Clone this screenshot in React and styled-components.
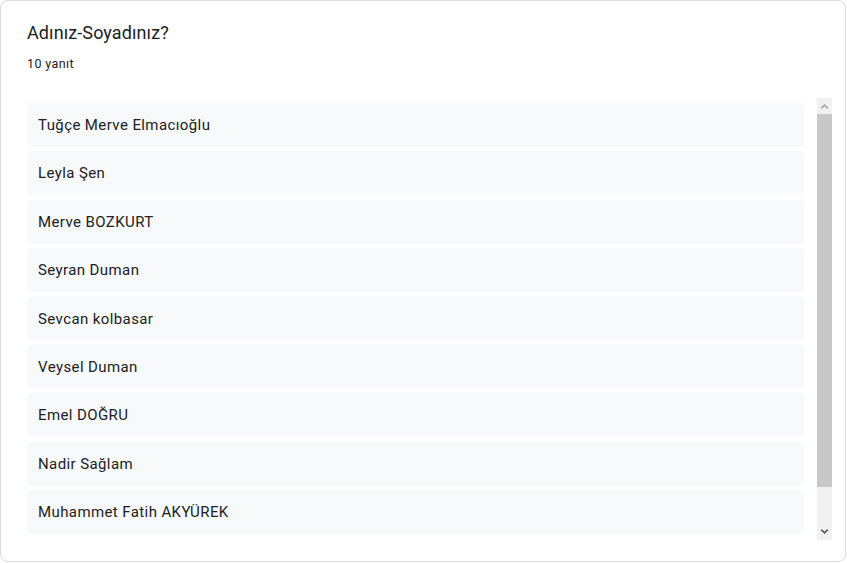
import React from "react";
import styled, { createGlobalStyle } from "styled-components";

const GlobalStyle = createGlobalStyle`
  html, body {
    margin: 0;
    padding: 0;
    background: #fff;
  }
  body {
    font-family: Roboto, "Liberation Sans", Arial, sans-serif;
    color: #202124;
  }
`;

const Card = styled.div`
  box-sizing: border-box;
  width: 846px;
  height: 562px;
  border: 1px solid #dadce0;
  border-radius: 8px;
  background: #fff;
  padding: 20px 13px 0 26px;
`;

const Title = styled.div`
  font-size: 18px;
  line-height: 24px;
  color: #202124;
  letter-spacing: 0.1px;
`;

const Count = styled.div`
  margin-top: 11px;
  font-size: 12.5px;
  line-height: 16px;
  color: #202124;
  letter-spacing: 0.4px;
`;

const Body = styled.div`
  margin-top: 26px;
  height: 442px;
  display: flex;
  gap: 13px;
`;

const List = styled.ul`
  flex: 1;
  list-style: none;
  margin: 0;
  padding: 5px 0 0;
  overflow: hidden;
`;

const Item = styled.li`
  box-sizing: border-box;
  height: 44px;
  margin-bottom: 4.4px;
  display: flex;
  align-items: center;
  padding: 0 11px;
  background: #f8f9fa;
  border-radius: 4px;
  font-size: 15px;
  letter-spacing: 0.4px;
  color: #202124;
`;

const ScrollBar = styled.div`
  width: 15px;
  display: flex;
  flex-direction: column;
  background: #f1f1f1;
`;

const Arrow = styled.div`
  height: 16px;
  display: flex;
  align-items: center;
  justify-content: center;
  color: ${(p) => p.$color};
`;

const Thumb = styled.div`
  height: 373px;
  background: #c8c8c8;
`;

const Track = styled.div`
  flex: 1;
`;

const Chevron = ({ up }) => (
  <svg width="9" height="6" viewBox="0 0 9 6">
    <path
      d={up ? "M0.5 5 L4.5 1 L8.5 5 L7 5.8 L4.5 3.3 L2 5.8 Z" : "M0.5 1 L4.5 5 L8.5 1 L7 0.2 L4.5 2.7 L2 0.2 Z"}
      fill="currentColor"
    />
  </svg>
);

const names = [
  "Tuğçe Merve Elmacıoğlu",
  "Leyla Şen",
  "Merve BOZKURT",
  "Seyran Duman",
  "Sevcan kolbasar",
  "Veysel Duman",
  "Emel DOĞRU",
  "Nadir Sağlam",
  "Muhammet Fatih AKYÜREK",
];

const App = () => {
  return (
    <>
      <GlobalStyle />
      <Card>
        <Title>Adınız-Soyadınız?</Title>
        <Count>10 yanıt</Count>
        <Body>
          <List>
            {names.map((name) => (
              <Item key={name}>{name}</Item>
            ))}
          </List>
          <ScrollBar>
            <Arrow $color="#a3a3a3">
              <Chevron up />
            </Arrow>
            <Thumb />
            <Track />
            <Arrow $color="#505050">
              <Chevron />
            </Arrow>
          </ScrollBar>
        </Body>
      </Card>
    </>
  );
};

export default App;
